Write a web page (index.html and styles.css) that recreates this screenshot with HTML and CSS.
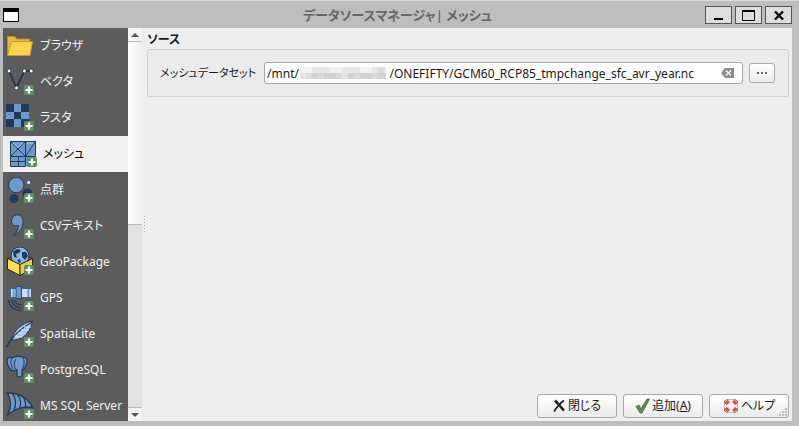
FILE: index.html
```html
<!DOCTYPE html>
<html lang="ja">
<head>
  <meta charset="UTF-8">
  <meta name="viewport" content="width=device-width, initial-scale=1.0">
  <title>データソースマネージャ| メッシュ</title>
  <link rel="stylesheet" href="styles.css">
</head>
<body>
  <svg class="defs" aria-hidden="true">
    <symbol id="plus" viewBox="0 0 10 10">
      <rect width="10" height="10" rx="2" fill="#5b9160"/>
      <path d="M5 1.500v7M1.500 5h7" stroke="#fff" stroke-width="2.200"/>
    </symbol>
  </svg>

  <header class="titlebar">
    <span class="window-icon"></span>
    <h1 class="window-title">データソースマネージャ| メッシュ</h1>
    <div class="window-buttons">
      <button class="window-button" type="button" aria-label="最小化">
        <svg width="25" height="16"><path d="M8 12h9" stroke="#000" stroke-width="2"/></svg>
      </button>
      <button class="window-button" type="button" aria-label="最大化">
        <svg width="25" height="16"><path d="M6.500 4v9.500h12V4" fill="none" stroke="#000"/><path d="M6 4h13" stroke="#000" stroke-width="2"/></svg>
      </button>
      <button class="window-button" type="button" aria-label="閉じる">
        <svg width="25" height="16"><path d="M9 4.500l8 8M17 4.500l-8 8" stroke="#000" stroke-width="2.400"/></svg>
      </button>
    </div>
  </header>

  <div class="dialog">
    <nav class="sidebar">
      <a class="source" href="#browser">
        <svg class="source-icon" viewBox="0 0 32 36">
          <path d="M4.500 27V8.500h7.500l1.500 2.500h13v5" fill="#e8b93a" stroke="#b8892a"/>
          <path d="M8.500 13.500h21L27 27.500H4.500z" fill="#fcd54c" stroke="#c9982f"/>
        </svg>
        ブラウザ
      </a>
      <a class="source" href="#vector">
        <svg class="source-icon" viewBox="0 0 32 36">
          <path d="M6 7l7.500 17L21.300 7h7" fill="none" stroke="#22354c" stroke-width="1.800"/>
          <g fill="#fff" stroke="#22354c" stroke-width=".8"><circle cx="6" cy="7" r="1.900"/><circle cx="13.500" cy="24" r="1.900"/><circle cx="21.300" cy="7" r="1.900"/><circle cx="28.300" cy="7" r="1.900"/></g>
          <use href="#plus" x="21" y="21" width="10" height="10"/>
        </svg>
        ベクタ
      </a>
      <a class="source" href="#raster">
        <svg class="source-icon" viewBox="0 0 32 36">
          <path d="M3 4h23v23H3z" fill="#1f3a5a"/>
          <path d="M11 4h7v8h-7zM3 12h8v7H3zM18 12h8v7h-8zM11 19h7v8h-7z" fill="#6d99cb"/>
          <use href="#plus" x="21" y="21" width="10" height="10"/>
        </svg>
        ラスタ
      </a>
      <a class="source selected" href="#mesh" aria-current="page">
        <svg class="source-icon" viewBox="0 0 32 36">
          <path d="M4.500 5.500h25v25h-25z" fill="#6d99cb"/>
          <path d="M4.500 5.500h15v15h-15zM19.500 5.500h10v15h-10zM4.500 20.500h15v10h-15zM4.500 5.500l15 15M19.500 5.500l-15 15M29.500 5.500l-10 15M4.500 25.500h15M12.500 20.500v10" fill="none" stroke="#1f3a5a"/>
          <path d="M7 7l5 4.500L17 7M21 7h6" fill="none" stroke="#b9d0ea"/>
          <use href="#plus" x="21" y="21" width="10" height="10"/>
        </svg>
        メッシュ
      </a>
      <a class="source" href="#pointcloud">
        <svg class="source-icon" viewBox="0 0 32 36">
          <circle cx="24.500" cy="21.500" r="5" fill="#1f3a5a"/>
          <circle cx="11" cy="26.500" r="4.500" fill="#1f3a5a"/>
          <circle cx="13.300" cy="13" r="7.700" fill="#6d99cb" stroke="#1f3a5a"/>
          <circle cx="25.700" cy="10.500" r="2.200" fill="#e4ecf5" stroke="#33475c"/>
          <use href="#plus" x="21" y="21" width="10" height="10"/>
        </svg>
        点群
      </a>
      <a class="source" href="#csv">
        <svg class="source-icon" viewBox="0 0 32 36">
          <path d="M13 7c5-1 7.500 3 7 8-.5 6-4 10-9.500 12.500 3-3 5-6 5-10-4 1.500-7-1-7-4.500 0-3 2-5.500 4.500-6z" fill="#6d99cb" stroke="#1f3a5a"/>
          <use href="#plus" x="21" y="21" width="10" height="10"/>
        </svg>
        CSVテキスト
      </a>
      <a class="source" href="#geopackage">
        <svg class="source-icon" viewBox="0 0 32 36">
          <path d="M4.500 14.500L17 9l12.500 5.500L17 20.500z" fill="#8b7a1a" stroke="#222"/>
          <circle cx="17" cy="12" r="9" fill="#8fb5e0" stroke="#1f3a5a"/>
          <path d="M10 8l4-3 4 1-2 3-3 1 1 4-3-1zM19 8l4 0 2 4-3 4-3-3zM14 16l3-1 1 3-2 1z" fill="#1f3a5a"/>
          <path d="M4.500 14.500L17 20.500v11L4.500 25z" fill="#ffe04a" stroke="#222"/>
          <path d="M29.500 14.500L17 20.500v11L29.500 25z" fill="#f0d030" stroke="#222"/>
          <use href="#plus" x="21" y="21" width="10" height="10"/>
        </svg>
        GeoPackage
      </a>
      <a class="source" href="#gps">
        <svg class="source-icon" viewBox="0 0 32 36">
          <path d="M7.500 8.500h21v9h-21z" fill="#cfe0f5" stroke="#35649a"/>
          <path d="M10.500 9v8M25.500 9v8" stroke="#6d99cb" stroke-width="2"/>
          <path d="M13 6.500h5.500v12H13z" fill="#6d99cb" stroke="#1f4a78"/>
          <path d="M11 20c1 3 4 5 8 4.500M8.500 20c1 5 5 8 10 7.500M5.500 20c1 7 6 10.500 13 10.500" fill="none" stroke="#26405f" stroke-width="1.300"/>
          <use href="#plus" x="21" y="21" width="10" height="10"/>
        </svg>
        GPS
      </a>
      <a class="source" href="#spatialite">
        <svg class="source-icon" viewBox="0 0 32 36">
          <path d="M29.500 5C19 7 11 14 8.500 23.500l3 .5C20 23 27 17 29.500 5z" fill="#a5c4e8" stroke="#1f3a5a"/>
          <path d="M29 6C17 13 9 20 3.500 31" fill="none" stroke="#1f3a5a" stroke-width="1.300"/>
          <path d="M15 17l8 1M12 20l8 1M18 14l8 0M21 11l7 0" stroke="#d8e6f6"/>
          <use href="#plus" x="21" y="21" width="10" height="10"/>
        </svg>
        SpatiaLite
      </a>
      <a class="source" href="#postgresql">
        <svg class="source-icon" viewBox="0 0 32 36">
          <path d="M9 6c2-2 9-2 11-.5 4-1 5 3 3 7.500-1 3-2.500 5-4 5v5c0 2.500-5 2.500-5 0v-5c-2 1-3-1-4 1-3 0-6-7-6-10C4 5 7 5 9 6z" fill="#6d99cb" stroke="#1f3a5a" stroke-width="1.200"/>
          <path d="M9 6c-2 4-1 7 1 11M14 18c-4-3-3-8-1-11M20 6c2 4 1 8-1 12" fill="none" stroke="#1f3a5a"/>
          <use href="#plus" x="21" y="21" width="10" height="10"/>
        </svg>
        PostgreSQL
      </a>
      <a class="source" href="#mssql">
        <svg class="source-icon" viewBox="0 0 32 36">
          <path d="M4.500 5C17 5 25 10 29.500 19.500 22 18 12 20 4.500 27.500 9 19 8.500 12 4.500 5z" fill="#6d99cb" stroke="#1f3a5a" stroke-width="1.300"/>
          <path d="M9.500 5.500c4 6 4 11.500 1 17.500M15 7c3 5 3.500 9 1.500 13M20.500 9.500c2 4 3 6 2 9.500" fill="none" stroke="#1f3a5a" stroke-width="1.300"/>
          <use href="#plus" x="21" y="21" width="10" height="10"/>
        </svg>
        MS SQL Server
      </a>
    </nav>

    <div class="scrollbar" aria-hidden="true">
      <span class="scroll-arrow"><svg width="8" height="4"><path d="M0 4l4-4 4 4z" fill="#555"/></svg></span>
      <span class="scroll-thumb"></span>
      <span class="scroll-track"></span>
      <span class="scroll-arrow"><svg width="8" height="4"><path d="M0 0l4 4 4-4z" fill="#555"/></svg></span>
    </div>
    <div class="splitter"></div>

    <main class="content">
      <h2 class="group-title">ソース</h2>
      <div class="group-box">
        <label for="dataset">メッシュデータセット</label>
        <div class="field">
          <input id="dataset" type="text" value="/mnt/&nbsp;&nbsp;&nbsp;&nbsp;&nbsp;&nbsp;&nbsp;&nbsp;&nbsp;&nbsp;&nbsp;&nbsp;&nbsp;&nbsp;&nbsp;&nbsp;&nbsp;&nbsp;&nbsp;&nbsp;&nbsp;&nbsp;&nbsp;&nbsp;&nbsp;&nbsp;&nbsp;&nbsp;&nbsp;/ONEFIFTY/GCM60_RCP85_tmpchange_sfc_avr_year.nc">
          <svg class="mosaic" width="86" height="12" aria-hidden="true">
            <path d="M0 0h86v12H0z" fill="#e6e6e6"/>
            <path d="M12 6h6v6h-6zM24 6h12v6H24zM48 6h6v6h-6zM60 6h12v6H60zM78 6h8v6h-8z" fill="#d2d2d2"/>
            <path d="M6 6h6v6H6zM18 6h6v6h-6zM36 6h6v6h-6zM54 6h6v6h-6zM72 6h6v6h-6zM78 0h6v6h-6z" fill="#dadada"/>
            <path d="M0 0h12v6H0zM30 0h12v6H30zM60 0h12v6H60z" fill="#f3f3f3"/>
          </svg>
          <button class="clear" type="button" aria-label="クリア">
            <svg width="13" height="10"><path d="M4 0h9v10H4L0 5z" fill="#8d8d8d"/><path d="M5 2.500l5 5M10 2.500l-5 5" stroke="#fff" stroke-width="1.200"/></svg>
          </button>
        </div>
        <button class="browse" type="button" aria-label="参照">
          <svg width="12" height="2"><path d="M1 0h2v2H1zM5 0h2v2H5zM9 0h2v2H9z" fill="#666"/></svg>
        </button>
      </div>

      <footer class="actions">
        <button class="action" type="button">
          <svg width="13" height="14"><path d="M2 1.500c3 3 6 7 9 10" fill="none" stroke="#222" stroke-width="2.600"/><path d="M11 1.500C7 4 4 8 1 12.500" fill="none" stroke="#222" stroke-width="1.800"/></svg>
          閉じる
        </button>
        <button class="action" type="button">
          <svg width="15" height="16"><path d="M1 8.500l3-1.500 2 4L12 1h2.500L7 15H5z" fill="#5f8d55" stroke="#3f6338" stroke-width=".8"/></svg>
          <span>追加(<u>A</u>)</span>
        </button>
        <button class="action" type="button">
          <svg width="16" height="16">
            <path d="M4 1.500h8M4 14.500h8M1.500 4v8M14.500 4v8" stroke="#bbb"/>
            <g fill="#e04e50"><path d="M1 3l3-2 3 3-3 3-3-2zM15 3l-3-2-3 3 3 3 3-2zM1 13l3 2 3-3-3-3-3 2zM15 13l-3 2-3-3 3-3 3 2z"/></g>
            <path d="M2 4l2-2M14 4l-2-2M2 12l2 2M14 12l-2 2" stroke="#f7c4c5"/>
          </svg>
          ヘルプ
        </button>
        <span class="size-grip"></span>
      </footer>
    </main>
  </div>
</body>
</html>
```
FILE: styles.css
```css
* {
  box-sizing: border-box;
}

body {
  display: flex;
  flex-direction: column;
  height: 100vh;
  margin: 0;
  padding: 0 7px 5px 3px;
  border-top: 1px solid #dadada;
  background: #bdbdbd;
  color: #1a1a1a;
  font-family: "Noto Sans", "Noto Sans CJK JP", sans-serif;
  font-size: 12px;
  line-height: 18px;
  font-feature-settings: "palt";
  overflow: hidden;
}

button,
input {
  font: inherit;
  font-feature-settings: inherit;
  color: inherit;
}

button {
  display: flex;
  align-items: center;
  justify-content: center;
  padding: 0;
}

svg {
  flex: none;
}

.defs {
  position: absolute;
  width: 0;
  height: 0;
}

/* title bar */
.titlebar {
  display: flex;
  flex: none;
  align-items: center;
  height: 27px;
}

.window-icon {
  width: 16px;
  height: 14px;
  border: 1px solid #000;
  border-top-width: 4px;
  background: #fff;
}

.window-title {
  flex: 1;
  margin: 0;
  padding-left: 71px;
  color: #666;
  font-size: 13px;
  font-weight: 600;
  text-align: center;
}

.window-buttons {
  display: flex;
  gap: 3px;
}

.window-button {
  width: 27px;
  height: 18px;
  border: 1px solid #555;
  background: #dedede;
}

.dialog {
  display: flex;
  flex: 1;
  min-height: 0;
  background: #eee;
}

/* source list */
.sidebar {
  flex: none;
  width: 125px;
  overflow: hidden;
  background: #5c5c5c;
}

.source {
  display: flex;
  align-items: center;
  gap: 5px;
  height: 36px;
  color: #f2f2f2;
  line-height: 20px;
  text-decoration: none;
  white-space: nowrap;
}

.source.selected {
  padding-left: 3px;
  background: #f0f0f0;
  color: #000;
}

.source-icon {
  width: 32px;
  height: 36px;
}

.scrollbar {
  display: flex;
  flex: none;
  flex-direction: column;
  width: 14px;
  background: #f4f4f4;
}

.scroll-arrow {
  display: flex;
  align-items: center;
  justify-content: center;
  height: 13px;
}

.scroll-thumb {
  flex: 1;
  border-top: 1px solid #bbb;
  border-bottom: 1px solid #bbb;
  background: linear-gradient(to right, #fff, #f0f0f0);
}

.scroll-track {
  flex: 1;
  border-bottom: 1px solid #bbb;
  background: #e2e2e2;
}

.splitter {
  flex: none;
  align-self: center;
  width: 5px;
  height: 17px;
  background: repeating-linear-gradient(#aaa 0 1px, transparent 1px 3px) 2px 0 / 1px 100% no-repeat;
}

/* source settings */
.content {
  display: flex;
  flex: 1;
  flex-direction: column;
  min-width: 0;
  padding: 3px 3px 3px 0;
}

.group-title {
  margin: 0;
  font-size: 12px;
}

.group-box {
  display: flex;
  align-items: center;
  gap: 6px;
  height: 48px;
  padding: 0 13px 0 12px;
  border: 1px solid #d2d2d2;
  border-radius: 2px;
  background: #ebebeb;
}

.group-box label {
  margin-right: 2px;
  font-size: 11px;
  white-space: nowrap;
}

.field {
  position: relative;
  display: flex;
  flex: 1;
  min-width: 0;
}

.field input {
  width: 100%;
  height: 22px;
  padding: 0 24px 0 2px;
  border: 1px solid #a6a6a6;
  border-radius: 3px;
  background: #fff;
}

.mosaic {
  position: absolute;
  top: 5px;
  left: 36px;
}

.clear {
  position: absolute;
  top: 6px;
  right: 9px;
  border: 0;
  background: none;
}

.browse,
.action {
  border: 1px solid #aaa;
  border-radius: 3px;
  background: linear-gradient(#fff, #ebebeb);
}

.browse {
  width: 26px;
  height: 20px;
}

.actions {
  position: relative;
  display: flex;
  justify-content: flex-end;
  gap: 6px;
  margin-top: auto;
}

.action {
  gap: 2px;
  width: 80px;
  height: 24px;
}

.size-grip {
  position: absolute;
  right: 1px;
  bottom: 1px;
  width: 12px;
  height: 12px;
  background: radial-gradient(circle at 1px 1px, #bbb 1px, transparent 1px) 0 0 / 3px 3px;
  clip-path: polygon(100% 0, 100% 100%, 0 100%);
}
```
